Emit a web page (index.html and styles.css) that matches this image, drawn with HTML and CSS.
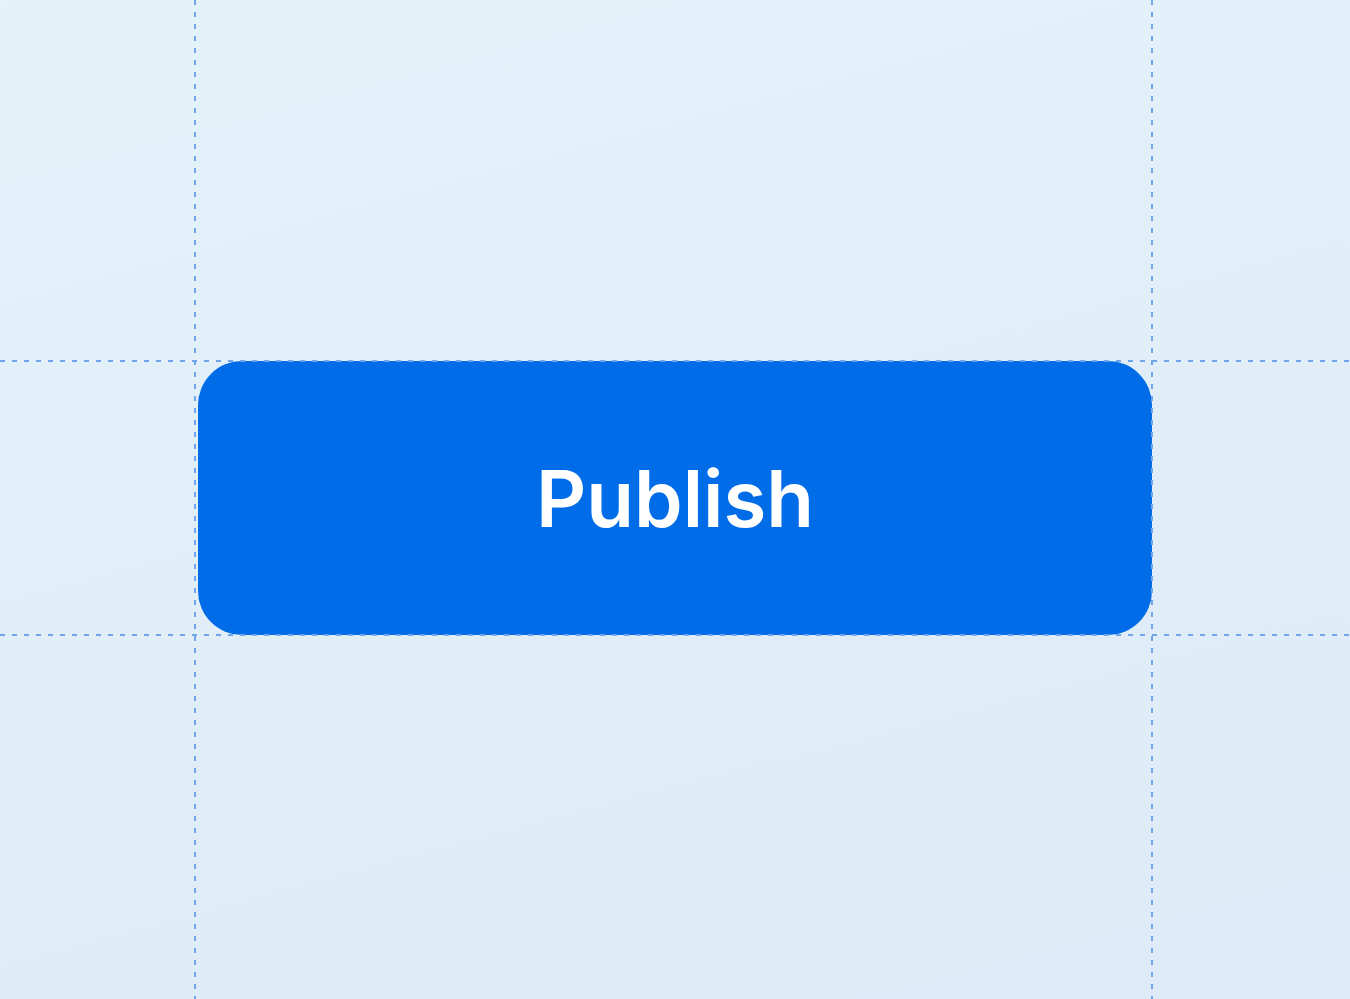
FILE: index.html
```html
<!DOCTYPE html>
<html lang="en">
<head>
<meta charset="utf-8">
<title>Publish</title>
<link rel="stylesheet" href="styles.css">
</head>
<body>
<main class="stage">
  <button class="publish" type="button">Publish</button>
</main>
<div class="guide guide-v guide-left"></div>
<div class="guide guide-v guide-right"></div>
<div class="guide guide-h guide-top"></div>
<div class="guide guide-h guide-bottom"></div>
</body>
</html>
```

FILE: styles.css
```css
html, body {
  margin: 0;
  padding: 0;
  width: 1350px;
  height: 999px;
  overflow: hidden;
}
body {
  background: linear-gradient(165deg, #e4f2fa 0%, #e1eef8 50%, #ddebf8 100%);
  font-family: Inter, "Noto Sans", "Liberation Sans", sans-serif;
  position: relative;
}
.stage {
  display: flex;
  padding: 361px 0 0 198px;
}
.publish {
  width: 954px;
  height: 274px;
  border: none;
  border-radius: 44px;
  background: #006ce8;
  color: #ffffff;
  font-family: Inter, "Noto Sans", "Liberation Sans", sans-serif;
  font-size: 78px;
  font-weight: 600;
  letter-spacing: 0;
  display: flex;
  align-items: center;
  justify-content: center;
  padding: 0;
  cursor: pointer;
}
.guide {
  position: absolute;
  pointer-events: none;
}
.guide-v {
  top: 0;
  bottom: 0;
  width: 2px;
  background: repeating-linear-gradient(to bottom, #6fa5eb 0 5px, transparent 5px 12px);
}
.guide-h {
  left: 0;
  right: 0;
  height: 2px;
  background: repeating-linear-gradient(to right, #6fa5eb 0 5px, transparent 5px 12px);
}
.guide-left { left: 194px; }
.guide-right { left: 1151px; }
.guide-top { top: 360px; }
.guide-bottom { top: 634px; }
```
